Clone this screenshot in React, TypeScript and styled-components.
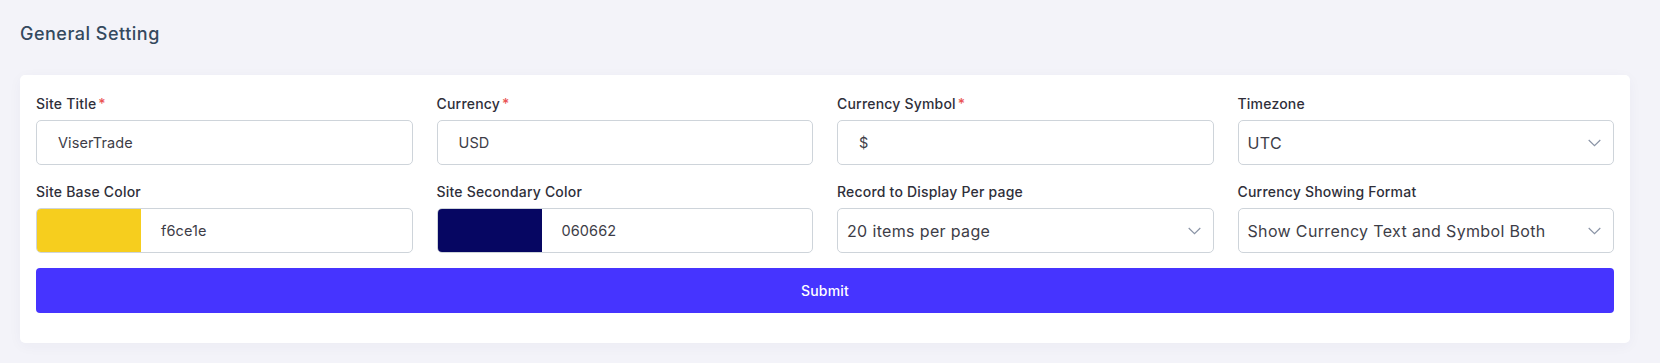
import React from 'react'
import styled, { createGlobalStyle } from 'styled-components'

const GlobalStyle = createGlobalStyle`
  * { box-sizing: border-box; }
  body {
    margin: 0;
    background: #f3f3f9;
    font-family: Inter, "Open Sans", sans-serif;
  }
`

const Page = styled.div`
  padding: 20px 30px 20px 20px;
`

const PageTitle = styled.h2`
  margin: 0 0 28px;
  font-size: 18px;
  line-height: 27px;
  font-weight: 500;
  letter-spacing: 0.5px;
  color: #34495e;
`

const Card = styled.form`
  background: #fff;
  border-radius: 5px;
  padding: 18px 16px 30px;
  box-shadow: 0 3px 14px rgba(40, 40, 90, 0.04);
`

const Grid = styled.div`
  display: grid;
  grid-template-columns: repeat(4, 1fr);
  column-gap: 24px;
  row-gap: 16px;
`

const Field = styled.div`
  display: flex;
  flex-direction: column;
`

const Label = styled.label`
  font-size: 14px;
  line-height: 21px;
  font-weight: 500;
  letter-spacing: 0.2px;
  color: #2f2f3a;
  margin-bottom: 6px;
`

const Required = styled.span`
  color: #ea5455;
  margin-left: 2px;
`

const Box = styled.div`
  height: 45px;
  border: 1px solid #ced4da;
  border-radius: 5px;
  display: flex;
  align-items: center;
  background: #fff;
  overflow: hidden;
`

const TextValue = styled.span<{ $pad?: number; $select?: boolean }>`
  padding-left: ${({ $pad }) => $pad ?? 20}px;
  font-size: ${({ $select }) => ($select ? 16 : 14.5)}px;
  letter-spacing: ${({ $select }) => ($select ? 0.35 : 0.1)}px;
  color: #3d3d47;
  flex: 1;
  white-space: nowrap;
`

const Swatch = styled.span<{ $color: string }>`
  width: 104px;
  align-self: stretch;
  background: ${({ $color }) => $color};
`

const Chevron = styled.svg`
  width: 13px;
  height: 8px;
  margin-right: 12px;
  flex-shrink: 0;
`

const SubmitButton = styled.button`
  margin-top: 15px;
  width: 100%;
  height: 45px;
  border: none;
  border-radius: 4px;
  background: #4634ff;
  color: #fff;
  font-family: Inter, "Open Sans", sans-serif;
  font-size: 14px;
  font-weight: 500;
  letter-spacing: 0.2px;
`

function Arrow() {
  return (
    <Chevron viewBox="0 0 13 8">
      <path d="M0.7 1 L6.5 6.6 L12.3 1" fill="none" stroke="#8a94a6" strokeWidth="1.2" />
    </Chevron>
  )
}

function FieldLabel({ text, required }: { text: string; required?: boolean }) {
  return (
    <Label>
      {text}
      {required && <Required>*</Required>}
    </Label>
  )
}

export default function App() {
  return (
    <Page>
      <GlobalStyle />
      <PageTitle>General Setting</PageTitle>
      <Card onSubmit={(e) => e.preventDefault()}>
        <Grid>
          <Field>
            <FieldLabel text="Site Title" required />
            <Box><TextValue $pad={21}>ViserTrade</TextValue></Box>
          </Field>
          <Field>
            <FieldLabel text="Currency" required />
            <Box><TextValue $pad={21}>USD</TextValue></Box>
          </Field>
          <Field>
            <FieldLabel text="Currency Symbol" required />
            <Box><TextValue $pad={21}>$</TextValue></Box>
          </Field>
          <Field>
            <FieldLabel text="Timezone" />
            <Box><TextValue $pad={9} $select>UTC</TextValue><Arrow /></Box>
          </Field>
          <Field>
            <FieldLabel text="Site Base Color" />
            <Box><Swatch $color="#f6ce1e" /><TextValue>f6ce1e</TextValue></Box>
          </Field>
          <Field>
            <FieldLabel text="Site Secondary Color" />
            <Box><Swatch $color="#060662" /><TextValue>060662</TextValue></Box>
          </Field>
          <Field>
            <FieldLabel text="Record to Display Per page" />
            <Box><TextValue $pad={9} $select>20 items per page</TextValue><Arrow /></Box>
          </Field>
          <Field>
            <FieldLabel text="Currency Showing Format" />
            <Box><TextValue $pad={9} $select>Show Currency Text and Symbol Both</TextValue><Arrow /></Box>
          </Field>
        </Grid>
        <SubmitButton type="submit">Submit</SubmitButton>
      </Card>
    </Page>
  )
}
